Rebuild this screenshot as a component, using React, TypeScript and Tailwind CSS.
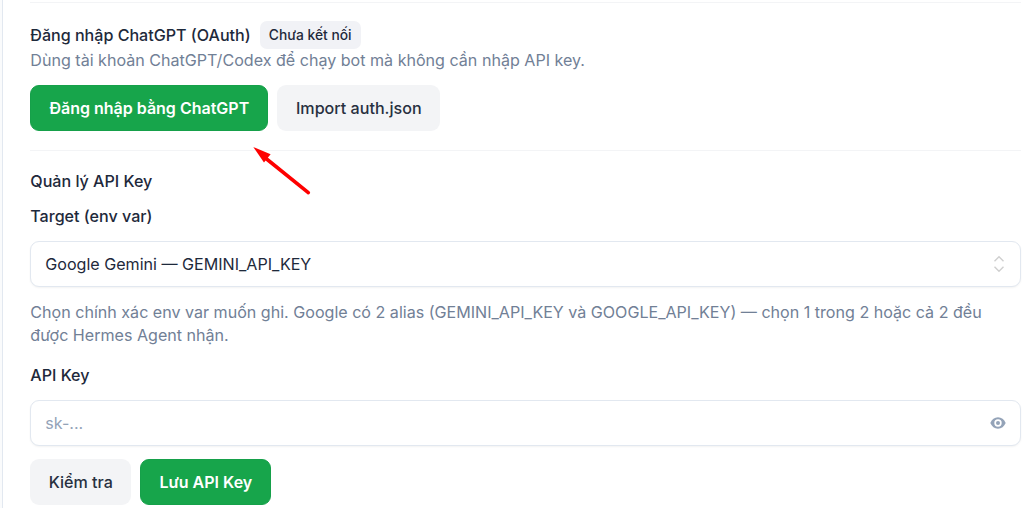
import { useState } from "react";
import type { ReactNode } from "react";

type ButtonProps = {
  children: ReactNode;
  className: string;
  primary?: boolean;
};

const Button = ({ children, className, primary }: ButtonProps) => (
  <button
    type="button"
    className={`flex h-[46px] shrink-0 items-center justify-center rounded-[9px] whitespace-nowrap ${className} ${
      primary
        ? "border border-[#16a04a] bg-[#17a54b] text-[16px] font-semibold text-white"
        : "bg-[#f3f4f6] text-[16.1px] font-medium text-[#27303f]"
    }`}
  >
    {children}
  </button>
);

const ChevronUpDown = () => (
  <svg className="h-[18px] w-3" viewBox="0 0 12 18" fill="none" stroke="#cfcfcf" strokeWidth="1.4">
    <path d="M1.5 6.2 6 1.8l4.5 4.4M1.5 11.8 6 16.2l4.5-4.4" />
  </svg>
);

const Eye = () => (
  <svg className="h-3 w-4" viewBox="0 0 16 12">
    <path
      fill="#94a3b8"
      fillRule="evenodd"
      d="M8 .3C4.6.3 1.800 2.500.3 6c1.500 3.500 4.300 5.700 7.700 5.700s6.200-2.200 7.700-5.700C14.200 2.500 11.400.3 8 .3Zm0 9.400a3.700 3.700 0 1 1 0-7.400 3.700 3.700 0 0 1 0 7.400Z"
    />
    <circle cx="8" cy="6" r="2" fill="#94a3b8" />
  </svg>
);

const Arrow = () => (
  <svg className="pointer-events-none absolute top-[146px] left-[252px] h-[50px] w-[60px]" viewBox="252 146 60 50">
    <path d="M266 158.500 308.300 192.700" stroke="#fe0000" strokeWidth="3.600" strokeLinecap="round" />
    <path d="M253.300 147 270.600 154.300 264 162.500Z" fill="#fe0000" />
  </svg>
);

const App = () => {
  const [key, setKey] = useState("");
  const [visible, setVisible] = useState(false);

  return (
    <div className="relative flex h-[508px] overflow-hidden bg-white font-[Inter,sans-serif] text-[16.08px] leading-[23px] text-[#1e293b]">
      <div className="w-[3px] shrink-0 border-r border-[#e2e8f0] bg-[#fafbfc]" />
      <main className="flex min-w-0 flex-1 flex-col pt-0.5 pr-[3px] pl-[27.3px]">
        <section className="flex h-[149px] shrink-0 flex-col border-y border-[#f3f4f6] pt-[18px]">
          <div className="flex h-7 items-center gap-[9px]">
            <h2 className="font-medium whitespace-nowrap">Đăng nhập ChatGPT (OAuth)</h2>
            <span className="flex h-7 w-[101px] items-center justify-center rounded-[7px] bg-[#f1f2f6] text-[13.8px] font-medium whitespace-nowrap">
              Chưa kết nối
            </span>
          </div>
          <p className="text-[#718096]">Dùng tài khoản ChatGPT/Codex để chạy bot mà không cần nhập API key.</p>
          <div className="mt-[13.4px] flex gap-[9px]">
            <Button primary className="w-[238px]">Đăng nhập bằng ChatGPT</Button>
            <Button className="w-[163px]">Import auth.json</Button>
          </div>
        </section>

        <section className="flex flex-col pt-[19px]">
          <h2 className="font-medium">Quản lý API Key</h2>
          <h3 className="mt-3 font-medium">Target (env var)</h3>
          <button
            type="button"
            className="mt-[13px] flex h-[46px] items-center justify-between rounded-[9px] border border-[#e2e8f0] bg-white pr-[15px] pl-3.5 shadow-xs"
          >
            <span>Google Gemini — GEMINI_API_KEY</span>
            <ChevronUpDown />
          </button>
          <p className="mt-3.5 text-[#718096]">
            Chọn chính xác env var muốn ghi. Google có 2 alias (GEMINI_API_KEY và GOOGLE_API_KEY) — chọn 1 trong 2 hoặc cả 2 đều
            <br />
            được Hermes Agent nhận.
          </p>
          <label htmlFor="api-key" className="mt-[17px] font-medium">API Key</label>
          <div className="mt-[13px] flex h-[46px] items-center rounded-[9px] border border-[#e2e8f0] bg-white pr-3.5 pl-3.5 shadow-xs">
            <input
              id="api-key"
              type={visible ? "text" : "password"}
              value={key}
              onChange={(e) => setKey(e.target.value)}
              placeholder="sk-..."
              className="min-w-0 flex-1 outline-none placeholder:text-[#94a3b8]"
            />
            <button type="button" aria-label="API Key" onClick={() => setVisible(!visible)}>
              <Eye />
            </button>
          </div>
          <div className="mt-[13px] flex gap-[9px]">
            <Button className="w-[101px]">Kiểm tra</Button>
            <Button primary className="w-[131px]">Lưu API Key</Button>
          </div>
        </section>
      </main>
      <Arrow />
    </div>
  );
};

export default App;
